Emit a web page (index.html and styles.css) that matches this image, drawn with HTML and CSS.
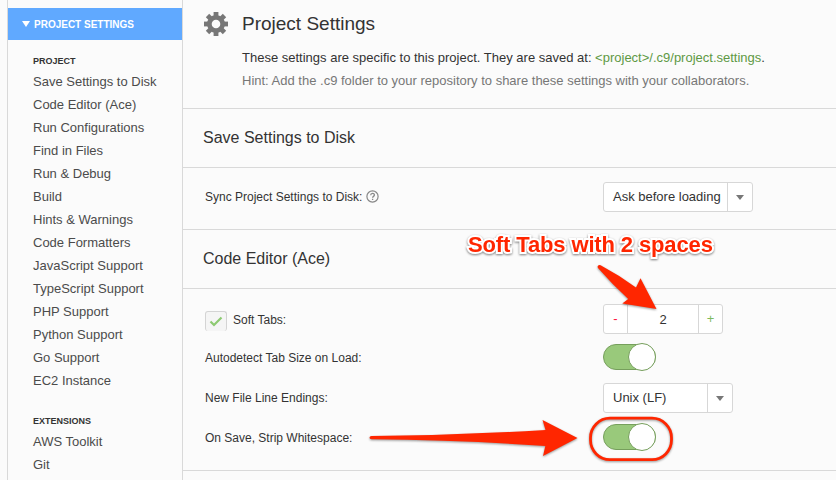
FILE: index.html
```html
<!DOCTYPE html>
<html lang="en">
<head>
<meta charset="utf-8">
<title>Project Settings</title>
<link rel="stylesheet" href="styles.css">
</head>
<body>
<div class="app">
  <nav class="sidebar">
    <div class="nav-head"><span class="tri"></span>PROJECT SETTINGS</div>
    <h4>PROJECT</h4>
    <ul>
      <li>Save Settings to Disk</li>
      <li>Code Editor (Ace)</li>
      <li>Run Configurations</li>
      <li>Find in Files</li>
      <li>Run &amp; Debug</li>
      <li>Build</li>
      <li>Hints &amp; Warnings</li>
      <li>Code Formatters</li>
      <li>JavaScript Support</li>
      <li>TypeScript Support</li>
      <li>PHP Support</li>
      <li>Python Support</li>
      <li>Go Support</li>
      <li>EC2 Instance</li>
    </ul>
    <h4 class="ext">EXTENSIONS</h4>
    <ul>
      <li>AWS Toolkit</li>
      <li>Git</li>
    </ul>
  </nav>
  <main>
    <header class="intro">
      <svg class="gear" width="24" height="24" viewBox="0 0 24 24">
        <g fill="#777">
          <rect x="9.6" y="0" width="4.8" height="24"/>
          <rect x="9.6" y="0" width="4.8" height="24" transform="rotate(45 12 12)"/>
          <rect x="9.6" y="0" width="4.8" height="24" transform="rotate(90 12 12)"/>
          <rect x="9.6" y="0" width="4.8" height="24" transform="rotate(135 12 12)"/>
          <circle cx="12" cy="12" r="9"/>
        </g>
        <circle cx="12" cy="12" r="4.3" fill="#fbfbfb"/>
      </svg>
      <div>
        <h1>Project Settings</h1>
        <p>These settings are specific to this project. They are saved at: <span class="path">&lt;project&gt;/.c9/project.settings</span>.</p>
        <p class="hint">Hint: Add the .c9 folder to your repository to share these settings with your collaborators.</p>
      </div>
    </header>
    <h2 class="save-title">Save Settings to Disk</h2>
    <section class="save-rows">
      <div class="row">
        <div class="label">Sync Project Settings to Disk:
          <svg class="help" width="13" height="13" viewBox="0 0 13 13" fill="none" stroke="#888">
            <circle cx="6.5" cy="6.5" r="5.6" stroke-width="1.2"/>
            <path d="M4.7 5.3C4.7 2.8 8.4 2.9 8.4 5.1C8.4 6.4 6.6 6.4 6.6 7.7M6.6 8.7V10" stroke-width="1.3"/>
          </svg>
        </div>
        <div class="select wide"><span>Ask before loading</span><i></i></div>
      </div>
    </section>
    <h2 class="code-title">Code Editor (Ace)</h2>
    <section class="code-rows">
      <div class="row">
        <div class="label soft"><span class="check"><svg width="14" height="11" viewBox="0 0 14 11"><path d="M1.5 5.5L5 9L12.5 1.5" fill="none" stroke="#8dca72" stroke-width="2.2"/></svg></span><span class="soft-text">Soft Tabs:</span></div>
        <div class="stepper"><b class="minus">-</b><span>2</span><b class="plus">+</b></div>
      </div>
      <div class="row">
        <div class="label">Autodetect Tab Size on Load:</div>
        <div class="toggle"><i></i></div>
      </div>
      <div class="row">
        <div class="label">New File Line Endings:</div>
        <div class="select"><span>Unix (LF)</span><i></i></div>
      </div>
      <div class="row">
        <div class="label">On Save, Strip Whitespace:</div>
        <div class="toggle"><i></i></div>
      </div>
    </section>
  </main>
  <div class="callout">Soft Tabs with 2 spaces</div>
  <svg class="marks" width="836" height="480" viewBox="0 0 836 480">
    <g fill="#ff2600">
      <path d="M597.6 266.4Q598.2 264.2 600.6 265.2Q619 275 636 287.4L640.5 278.2L656.5 309L622.3 303.6L628.2 299Q611.5 283.5 598.2 268.2Q597.6 267.3 597.6 266.4Z"/>
      <path d="M371.5 436Q458 435 545.5 430L542.5 420L577.5 438L543 456L545.3 446Q458 440 371.5 439.3Q369.5 439 369.5 437.7Q369.5 436 371.5 436Z"/>
    </g>
    <rect x="590.5" y="418.2" width="81" height="41.4" rx="19.5" fill="none" stroke="#ff2600" stroke-width="2.8"/>
  </svg>
</div>
</body>
</html>
```
FILE: styles.css
```css
* { box-sizing: border-box; }
body {
  margin: 0;
  background: #fbfbfb;
  color: #333;
  font-family: "Liberation Sans", Arial, sans-serif;
}
h1, h2, h4, p, ul { margin: 0; padding: 0; font-weight: normal; }
.app {
  position: relative;
  display: flex;
  width: 836px;
  height: 480px;
  padding-left: 7px;
  overflow: hidden;
}
.sidebar {
  width: 176px;
  flex: none;
  padding-top: 8px;
  border-left: 1px solid #d9d9d9;
  border-right: 1px solid #d9d9d9;
}
.nav-head {
  display: flex;
  align-items: center;
  height: 32px;
  padding-left: 14px;
  background: #60a9ff;
  color: #fff;
  font-size: 10px;
  font-weight: bold;
}
.tri {
  margin-right: 4px;
  border: 4px solid transparent;
  border-top: 6px solid #fff;
  border-bottom: 0;
}
h4 {
  margin: 16px 0 3px 25px;
  font-size: 9px;
  line-height: 11px;
  font-weight: bold;
}
h4.ext { margin-top: 24px; }
li {
  list-style: none;
  padding-left: 25px;
  font-size: 13px;
  line-height: 23px;
  color: #4b4b4b;
}
main { flex: 1; min-width: 0; }
.intro {
  display: flex;
  gap: 14px;
  height: 109px;
  padding: 12px 0 0 21px;
  border-bottom: 1px solid #d9d9d9;
}
h1 { font-size: 19px; line-height: 24px; margin-bottom: 10px; }
p { font-size: 13px; line-height: 23px; white-space: nowrap; }
.path { color: #5e9944; }
.hint { color: #777; }
h2 {
  display: flex;
  align-items: center;
  padding-left: 20px;
  font-size: 16px;
  border-bottom: 1px solid #d9d9d9;
}
.save-title { height: 59px; }
.code-title { height: 59px; }
section { padding-left: 22px; border-bottom: 1px solid #d9d9d9; }
.save-rows { height: 62px; padding-top: 9px; }
.code-rows { height: 182px; padding-top: 10px; }
.row { display: flex; align-items: center; height: 40px; }
.code-rows .row:nth-child(2) { height: 38px; margin-bottom: 1px; }
.label { display: flex; align-items: center; width: 398px; font-size: 12px; }
.help { margin: 0 0 1px 3.5px; }
.check {
  display: flex;
  align-items: center;
  justify-content: center;
  width: 22px;
  height: 20px;
  margin: 4px 6px 0 0;
  border: 1px solid #d4d4d4;
  border-bottom: 0;
  border-radius: 3px;
  background: #f5f5f5;
}
.soft-text { padding-top: 2px; }
.select, .stepper {
  display: flex;
  height: 30px;
  border: 1px solid #d7d7d7;
  border-radius: 3px;
  background: #fff;
  font-size: 13px;
  line-height: 28px;
}
.select { width: 130px; }
.select.wide { width: 150px; }
.select span { flex: 1; padding-left: 9px; white-space: nowrap; }
.select i {
  display: flex;
  align-items: center;
  justify-content: center;
  width: 25px;
  border-left: 1px solid #d7d7d7;
}
.select i::before {
  content: "";
  border: 4px solid transparent;
  border-top: 5px solid #777;
  border-bottom: 0;
}
.stepper { width: 120px; text-align: center; }
.stepper span { flex: 1; border: solid #d7d7d7; border-width: 0 1px; line-height: 29px; }
.stepper b { width: 23px; font-weight: normal; }
.stepper .minus { color: #ff1040; }
.stepper .plus { color: #7dbb5e; }
.toggle {
  display: flex;
  justify-content: flex-end;
  align-items: center;
  width: 53px;
  height: 26px;
  margin-bottom: 2px;
  border: 1px solid #769f5c;
  border-radius: 13px;
  background: #99c97b;
}
.toggle i {
  flex: none;
  width: 28px;
  height: 28px;
  margin-right: -1px;
  border: 1px solid #769f5c;
  border-radius: 50%;
  background: #fff;
}
.callout {
  position: absolute;
  left: 468px;
  top: 232px;
  color: #ff2600;
  font-size: 22px;
  line-height: 25px;
  font-weight: bold;
  letter-spacing: -.13px;
  white-space: nowrap;
  paint-order: stroke fill;
  -webkit-text-stroke: 4px #fff;
  filter: drop-shadow(0 1px 1px rgba(0, 0, 0, .5));
}
.marks {
  position: absolute;
  left: 0;
  top: 0;
  filter: drop-shadow(0 1px 1px rgba(0, 0, 0, .4));
}
```
